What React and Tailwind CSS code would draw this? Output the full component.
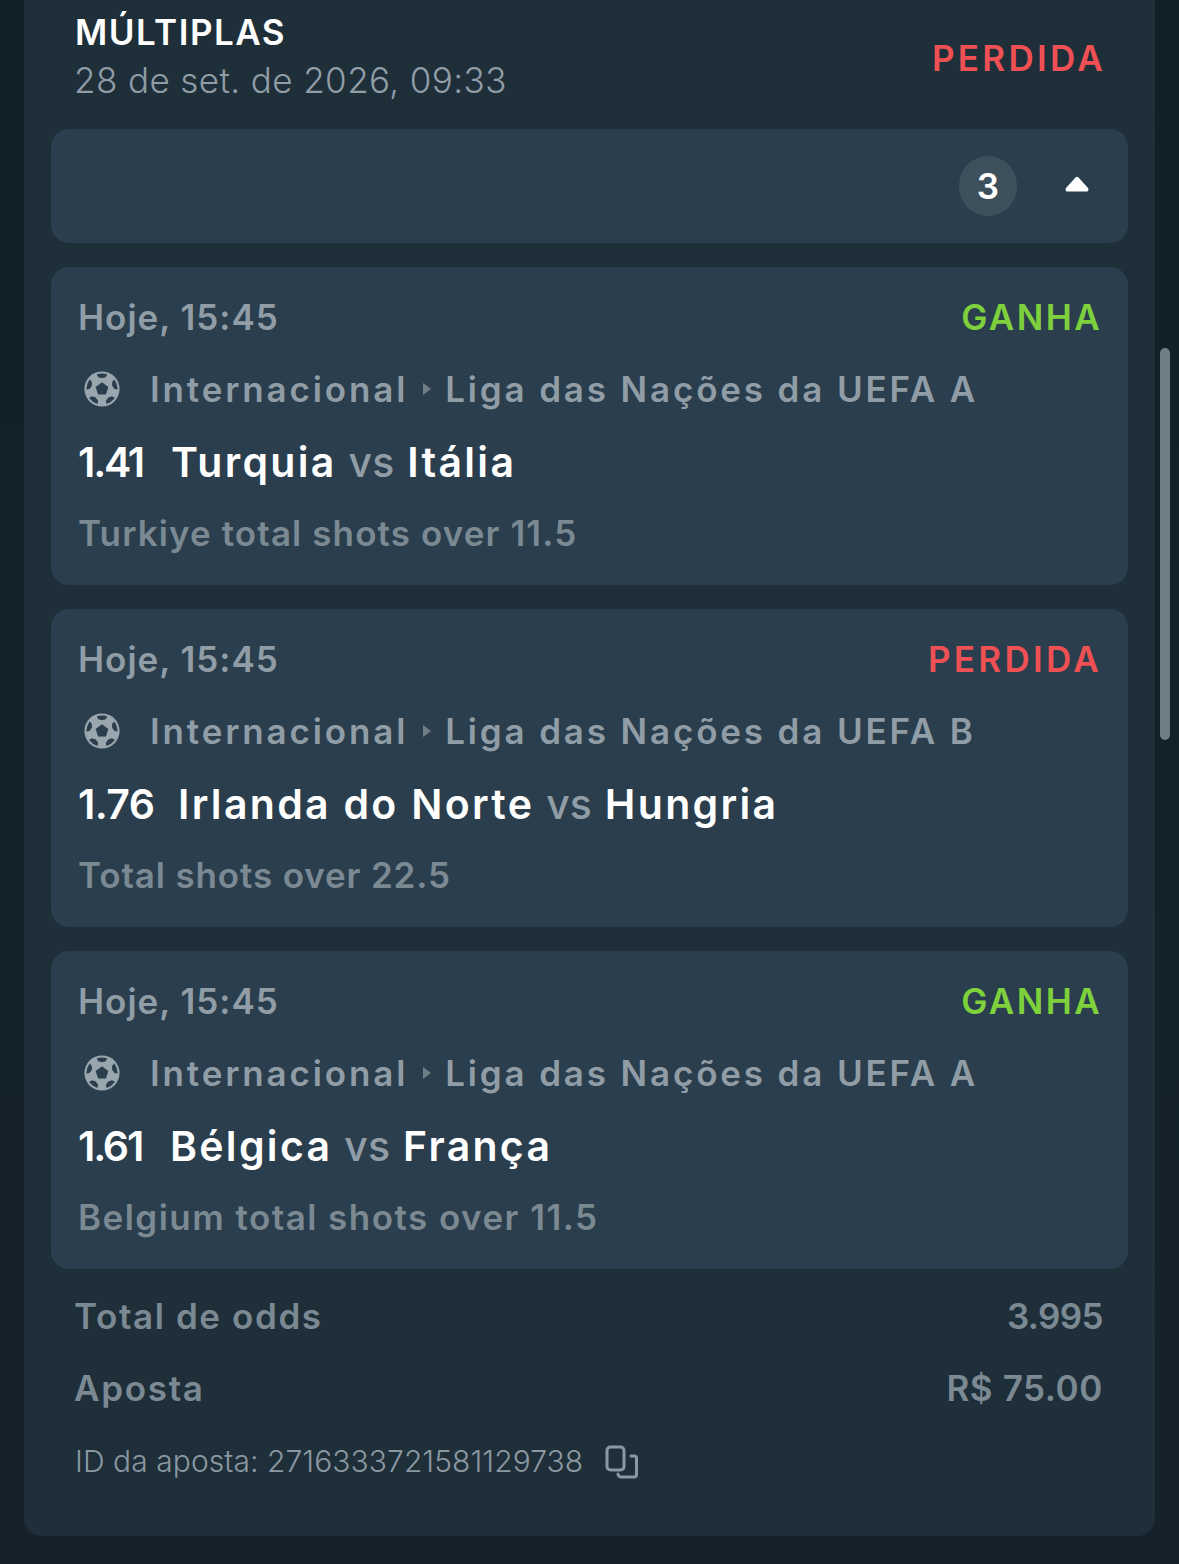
const font = { fontFamily: '"Inter", "Liberation Sans", sans-serif' };

const legs = [
  { status: "GANHA", league: "Liga das Nações da UEFA A", odd: "1.41", oddClass: "w-[93px] tracking-[-2.2px]", home: "Turquia", away: "Itália", market: "Turkiye total shots over 11.5", marketClass: "tracking-[1.1px]" },
  { status: "PERDIDA", league: "Liga das Nações da UEFA B", odd: "1.76", oddClass: "w-[100px] tracking-[-0.6px]", home: "Irlanda do Norte", away: "Hungria", market: "Total shots over 22.5", marketClass: "tracking-[0.86px]" },
  { status: "GANHA", league: "Liga das Nações da UEFA A", odd: "1.61", oddClass: "w-[92px] tracking-[-2.2px]", home: "Bélgica", away: "França", market: "Belgium total shots over 11.5", marketClass: "tracking-[1.46px]" },
];

function SoccerBall() {
  return (
    <svg viewBox="0 0 40 40" className="w-[38px] h-[38px] shrink-0">
      <circle cx="20" cy="20" r="18.500" fill="#9aa6ae" />
      <path d="M20 13l6.700 4.900-2.600 7.900h-8.200l-2.600-7.900z" fill="#2a3e4d" />
      {[0, 72, 144, 216, 288].map((deg) => (
        <path key={deg} d="M14.500 4.400q5.500-1.500 11 0l-1.500 3.100-4 1.300-4-1.300z" fill="#2a3e4d" transform={`rotate(${deg} 20 20)`} />
      ))}
    </svg>
  );
}

function CopyIcon() {
  return (
    <svg viewBox="0 0 34 34" fill="none" stroke="#8b98a1" strokeWidth="3" className="w-[34px] h-[34px]">
      <rect x="2" y="2" width="17" height="23" rx="3.500" />
      <path d="M26 11h3.500a2 2 0 0 1 2 2v16.500a2.500 2.500 0 0 1-2.500 2.500h-13a3 3 0 0 1-3-3" strokeLinecap="round" />
    </svg>
  );
}

function LegCard({ leg }) {
  const lost = leg.status === "PERDIDA";
  return (
    <div className="rounded-[18px] bg-[#2a3e4d] px-[27px] py-[15px]">
      <div className="-mr-[1px] flex h-[72px] items-center justify-between pb-[2px]">
        <span className="text-[35px] font-semibold tracking-[1px] text-[#909da6]">Hoje, 15:45</span>
        <span className={`text-[35px] font-semibold ${lost ? "tracking-[3.3px] text-[#ee5054]" : "tracking-[2.4px] text-[#7ed03c]"}`}>{leg.status}</span>
      </div>
      <div className="flex h-[72px] items-center pb-[2px] text-[35px] font-semibold tracking-[2.85px] text-[#909da6]">
        <span className="ml-[5px] mr-[29px] flex"><SoccerBall /></span>
        <span>Internacional</span>
        <span className="ml-[15px] mr-[14px] h-0 w-0 border-y-[6px] border-l-[8px] border-y-transparent border-l-[#6f7d87]" />
        <span>{leg.league}</span>
      </div>
      <div className="flex h-[72px] items-center pt-[2px] text-[41px] font-semibold tracking-[2.3px] text-white">
        <span className={leg.oddClass}>{leg.odd}</span>
        <span>{leg.home}</span>
        <span className="ml-[12px] mr-[13px] font-medium tracking-normal text-[#909da6]">vs</span>
        <span>{leg.away}</span>
      </div>
      <div className={`flex h-[72px] items-center pb-[2px] text-[35px] font-semibold text-[#7b8993] ${leg.marketClass}`}>{leg.market}</div>
    </div>
  );
}

export default function App() {
  return (
    <div style={font} className="relative h-[1564px] w-[1179px] overflow-hidden bg-gradient-to-b from-[#0f2029] to-[#16222b]">
      <div className="mx-[24px] flex h-[1536px] flex-col rounded-b-[18px] bg-[#1f2f3a] px-[27px]">
        <div className="flex h-[129px] items-center justify-between pb-[12px] pl-[24px] pr-[22px]">
          <div className="mb-[6px] flex flex-col">
            <span className="text-[35px] font-semibold leading-[48px] tracking-[1.5px] text-white">MÚLTIPLAS</span>
            <span className="-ml-[1px] text-[35px] font-light leading-[48px] tracking-[0.4px] text-[#909da6]">28 de set. de 2026, 09:33</span>
          </div>
          <span className="text-[35px] font-semibold tracking-[3.3px] text-[#ee5054]">PERDIDA</span>
        </div>

        <div className="flex h-[114px] items-center justify-end rounded-[18px] bg-[#2a3e4d] pr-[39px]">
          <span className="flex h-[60px] w-[58px] items-center justify-center rounded-full bg-[#3f505d] text-[35px] font-semibold text-white">3</span>
          <svg viewBox="0 0 24 16" className="mb-[4px] ml-[48px] h-[16px] w-[24px]">
            <path d="M10.500 1.500a2 2 0 0 1 3 0l9.500 10.500c1 1.400.3 3.500-1.500 3.500h-19c-1.800 0-2.500-2.100-1.500-3.500z" fill="#fff" />
          </svg>
        </div>

        <div className="mt-[24px] flex flex-col gap-[24px]">
          {legs.map((leg, i) => (
            <LegCard key={i} leg={leg} />
          ))}
        </div>

        <div className="mt-[11px] pl-[23px] pr-[25px]">
          <div className="flex h-[72px] items-center justify-between text-[35px] font-semibold text-[#7b8993]">
            <span className="tracking-[1.6px]">Total de odds</span>
            <span className="tracking-[-0.6px]">3.995</span>
          </div>
          <div className="flex h-[72px] items-center justify-between text-[35px] font-semibold text-[#7b8993]">
            <span className="tracking-[1.7px]">Aposta</span>
            <span className="tracking-[0.6px]">R$ 75.00</span>
          </div>
          <div className="ml-[1px] flex h-[73px] items-center pt-[2px] text-[30px] font-light tracking-[0.06px] text-[#8b98a1]">
            <span>ID da aposta: 2716333721581129738</span>
            <span className="ml-[22px] flex"><CopyIcon /></span>
          </div>
        </div>
      </div>

      {/* scrollbar */}
      <div className="absolute left-[1160px] top-[348px] h-[392px] w-[10px] rounded-full bg-[#6f7d87]" />
    </div>
  );
}
